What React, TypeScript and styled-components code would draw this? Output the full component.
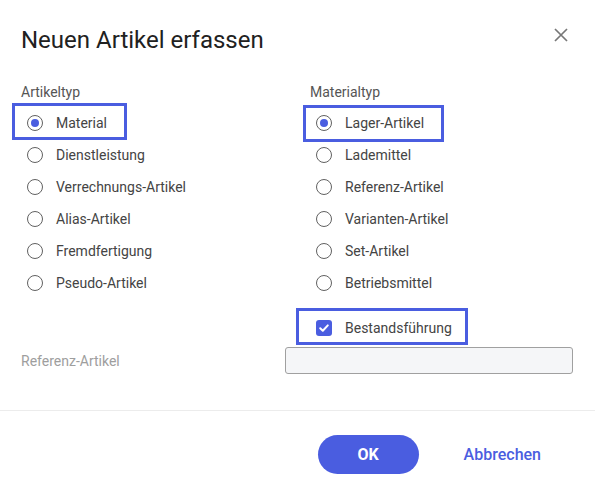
import React from "react";
import styled, { createGlobalStyle, css } from "styled-components";

const BLUE = "#4a5de0";

const GlobalStyle = createGlobalStyle`
  html, body { margin: 0; padding: 0; background: #fff; }
  body { font-family: Roboto, "Noto Sans", Arial, sans-serif; }
  * { box-sizing: border-box; }
`;

const Dialog = styled.div`
  width: 595px;
  height: 496px;
  background: #fff;
  display: flex;
  flex-direction: column;
`;

const Header = styled.header`
  display: flex;
  justify-content: space-between;
  align-items: flex-start;
  padding: 26px 22px 0 21px;
`;

const Title = styled.h1`
  margin: 0;
  font-size: 24px;
  line-height: 28px;
  font-weight: 400;
  color: #212121;
`;

const CloseButton = styled.button`
  width: 24px;
  height: 24px;
  margin-top: -3px;
  padding: 0;
  border: 0;
  background: none;
  display: flex;
  align-items: center;
  justify-content: center;
  color: #777;
  cursor: pointer;
`;

const Columns = styled.div`
  display: grid;
  grid-template-columns: 289px 1fr;
  padding: 28px 22px 0 21px;
`;

const Column = styled.div`
  display: flex;
  flex-direction: column;
  align-items: flex-start;
`;

const GroupLabel = styled.div`
  font-size: 14px;
  line-height: 20px;
  color: #555;
  margin-bottom: 5px;
`;

const OptionRow = styled.label<{ $mark?: string; $spaced?: boolean }>`
  position: relative;
  display: inline-flex;
  align-items: center;
  gap: 13px;
  height: 32px;
  padding-left: 6px;
  font-size: 14px;
  color: #444;
  cursor: pointer;
  ${(p) =>
    p.$spaced &&
    css`
      margin-top: 13px;
    `}
  ${(p) =>
    p.$mark &&
    css`
      &::after {
        content: "";
        position: absolute;
        inset: ${p.$mark};
        border: 3px solid ${BLUE};
        pointer-events: none;
      }
    `}
`;

const RadioCircle = styled.span<{ $checked?: boolean }>`
  width: 16px;
  height: 16px;
  flex: none;
  border-radius: 50%;
  border: 1.5px solid #616161;
  display: flex;
  align-items: center;
  justify-content: center;
  &::before {
    content: "";
    width: 8px;
    height: 8px;
    border-radius: 50%;
    background: ${BLUE};
    display: ${(p) => (p.$checked ? "block" : "none")};
  }
`;

const CheckBox = styled.span`
  width: 16px;
  height: 16px;
  flex: none;
  border-radius: 3px;
  background: ${BLUE};
  display: flex;
  align-items: center;
  justify-content: center;
`;

const FieldRow = styled.div`
  display: grid;
  grid-template-columns: 264px 1fr;
  align-items: center;
  padding: 3px 22px 0 21px;
`;

const FieldLabel = styled.label`
  font-size: 14px;
  color: #9e9e9e;
`;

const TextInput = styled.input`
  width: 100%;
  height: 27px;
  border: 1px solid #a0a0a0;
  border-radius: 3px;
  background: #f5f6f8;
  outline: none;
`;

const Divider = styled.hr`
  margin: 36px 0 0;
  border: 0;
  height: 1px;
  background: #ececec;
`;

const Footer = styled.footer`
  display: flex;
  justify-content: flex-end;
  align-items: center;
  gap: 25px;
  padding: 24px 34px 0 0;
`;

const Button = styled.button<{ $primary?: boolean }>`
  height: 39px;
  border: 0;
  font-family: Roboto, "Noto Sans", Arial, sans-serif;
  font-size: 16px;
  font-weight: 500;
  cursor: pointer;
  ${(p) =>
    p.$primary
      ? css`
          width: 101px;
          border-radius: 20px;
          background: ${BLUE};
          color: #fff;
          font-weight: 700;
        `
      : css`
          padding: 0 20px;
          background: none;
          color: ${BLUE};
        `}
`;

const artikelTypen = [
  "Material",
  "Dienstleistung",
  "Verrechnungs-Artikel",
  "Alias-Artikel",
  "Fremdfertigung",
  "Pseudo-Artikel",
];

const materialTypen = [
  "Lager-Artikel",
  "Lademittel",
  "Referenz-Artikel",
  "Varianten-Artikel",
  "Set-Artikel",
  "Betriebsmittel",
];

export default function App() {
  return (
    <>
      <GlobalStyle />
      <Dialog>
        <Header>
          <Title>Neuen Artikel erfassen</Title>
          <CloseButton aria-label="Schließen">
            <svg width="14" height="14" viewBox="0 0 14 14">
              <path
                d="M1 1 L13 13 M13 1 L1 13"
                stroke="currentColor"
                strokeWidth="1.7"
                fill="none"
              />
            </svg>
          </CloseButton>
        </Header>
        <Columns>
          <Column>
            <GroupLabel>Artikeltyp</GroupLabel>
            {artikelTypen.map((t, i) => (
              <OptionRow key={t} $mark={i === 0 ? "-4px -20px -1px -9px" : undefined}>
                <RadioCircle $checked={i === 0} />
                {t}
              </OptionRow>
            ))}
          </Column>
          <Column>
            <GroupLabel>Materialtyp</GroupLabel>
            {materialTypen.map((t, i) => (
              <OptionRow key={t} $mark={i === 0 ? "-2px -20px -3px -7px" : undefined}>
                <RadioCircle $checked={i === 0} />
                {t}
              </OptionRow>
            ))}
            <OptionRow $spaced $mark="-4px -16px -1px -14px">
              <CheckBox>
                <svg width="12" height="12" viewBox="0 0 12 12">
                  <path
                    d="M2.2 6.2 L4.8 8.7 L9.8 3.4"
                    stroke="#fff"
                    strokeWidth="2"
                    fill="none"
                    strokeLinecap="round"
                    strokeLinejoin="round"
                  />
                </svg>
              </CheckBox>
              Bestandsführung
            </OptionRow>
          </Column>
        </Columns>
        <FieldRow>
          <FieldLabel>Referenz-Artikel</FieldLabel>
          <TextInput />
        </FieldRow>
        <Divider />
        <Footer>
          <Button $primary>OK</Button>
          <Button>Abbrechen</Button>
        </Footer>
      </Dialog>
    </>
  );
}
